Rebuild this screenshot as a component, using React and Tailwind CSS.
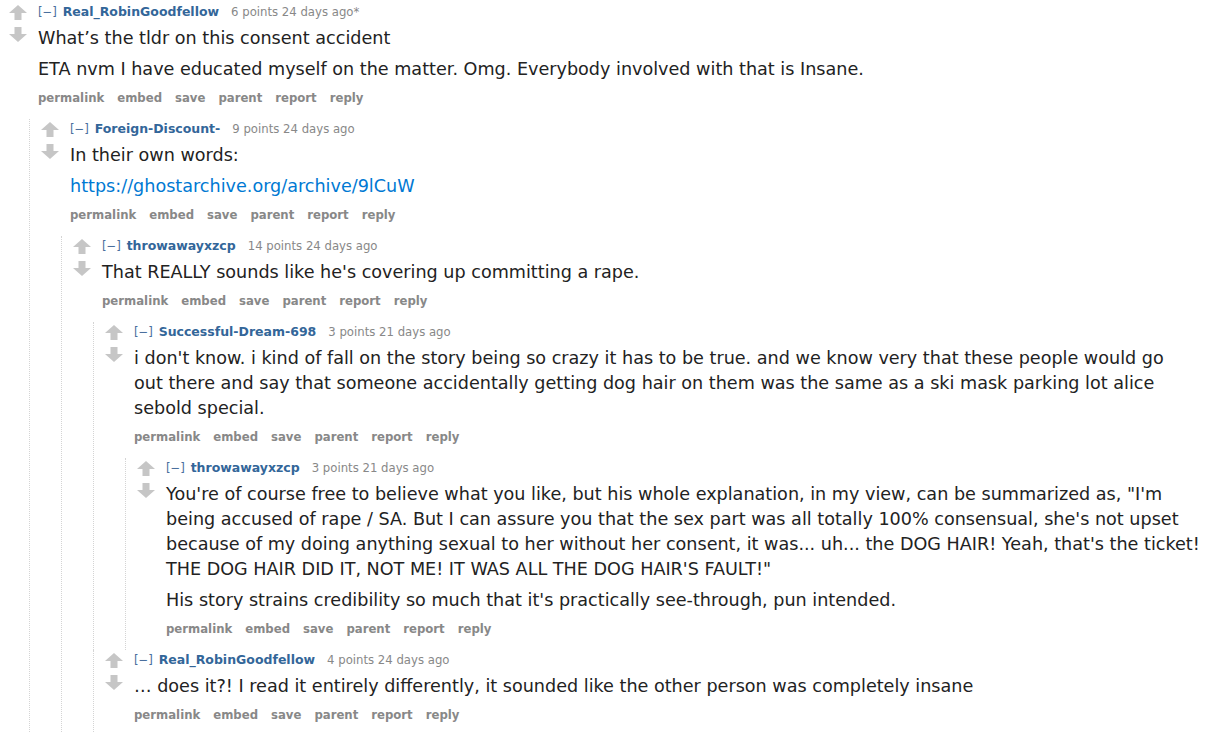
const FONT = { fontFamily: '"DejaVu Sans", Verdana, sans-serif' }

const THREAD = {
  user: 'Real_RobinGoodfellow',
  meta: '6 points 24 days ago*',
  body: [
    ['What’s the tldr on this consent accident'],
    ['ETA nvm I have educated myself on the matter. Omg. Everybody involved with that is Insane.'],
  ],
  children: [
    {
      user: 'Foreign-Discount-',
      meta: '9 points 24 days ago',
      body: [['In their own words:'], { link: 'https://ghostarchive.org/archive/9lCuW' }],
      children: [
        {
          user: 'throwawayxzcp',
          meta: '14 points 24 days ago',
          body: [["That REALLY sounds like he's covering up committing a rape."]],
          children: [
            {
              user: 'Successful-Dream-698',
              meta: '3 points 21 days ago',
              body: [
                [
                  "i don't know. i kind of fall on the story being so crazy it has to be true. and we know very that these people would go",
                  'out there and say that someone accidentally getting dog hair on them was the same as a ski mask parking lot alice',
                  'sebold special.',
                ],
              ],
              children: [
                {
                  user: 'throwawayxzcp',
                  meta: '3 points 21 days ago',
                  body: [
                    [
                      'You\'re of course free to believe what you like, but his whole explanation, in my view, can be summarized as, "I\'m',
                      "being accused of rape / SA. But I can assure you that the sex part was all totally 100% consensual, she's not upset",
                      "because of my doing anything sexual to her without her consent, it was... uh... the DOG HAIR! Yeah, that's the ticket!",
                      'THE DOG HAIR DID IT, NOT ME! IT WAS ALL THE DOG HAIR\'S FAULT!"',
                    ],
                    ["His story strains credibility so much that it's practically see-through, pun intended."],
                  ],
                },
              ],
            },
            {
              user: 'Real_RobinGoodfellow',
              meta: '4 points 24 days ago',
              body: [['… does it?! I read it entirely differently, it sounded like the other person was completely insane']],
            },
          ],
        },
      ],
    },
  ],
}

const BUTTONS = ['permalink', 'embed', 'save', 'parent', 'report', 'reply']

function Arrow({ down }) {
  return (
    <svg width="18" height="15" viewBox="0 0 18 15" className="block">
      {down ? (
        <path d="M5.5 0h7v7H18L9 15 0 7h5.5z" fill="#c6c6c6" />
      ) : (
        <path d="M9 0l9 8h-5.5v7h-7V8H0z" fill="#c6c6c6" />
      )}
    </svg>
  )
}

function Comment({ c, top }) {
  return (
    <div className={top ? 'pl-[9px]' : 'border-l border-dotted border-[#d4d4d4] pl-[11px]'}>
      <div className="flex">
        <div className="w-[18px] shrink-0 pt-[3px] flex flex-col gap-[7px]">
          <Arrow />
          <Arrow down />
        </div>
        <div className="ml-[11px] min-w-0">
          <div className="text-[11.7px] leading-[20px] text-[#888] whitespace-nowrap">
            <span className="text-[#4a6f9e]">[−]</span>{' '}
            <span className="ml-[2px] font-bold text-[12.5px] text-[#369]">{c.user}</span>
            <span className="ml-[12px]">{c.meta}</span>
          </div>
          <div className="mt-[4px] text-[17.6px] leading-[25px] text-[#222] space-y-[6px]">
            {c.body.map((p, i) =>
              p.link ? (
                <p key={i}>
                  <a className="text-[#0079d3]" href="#">{p.link}</a>
                </p>
              ) : (
                <p key={i} className="whitespace-nowrap">
                  {p.map((line, j) => (
                    <span key={j}>
                      {line}
                      {j < p.length - 1 && <br />}
                    </span>
                  ))}
                </p>
              )
            )}
          </div>
          <ul className="mt-[8px] mb-[13px] flex gap-[13px] text-[11.7px] leading-[16px] font-bold text-[#888]">
            {BUTTONS.map(b => (
              <li key={b}>{b}</li>
            ))}
          </ul>
        </div>
      </div>
      {c.children && (
        <div className="ml-[20px]">
          {c.children.map((ch, i) => (
            <Comment key={i} c={ch} />
          ))}
        </div>
      )}
    </div>
  )
}

export default function App() {
  return (
    <div className="bg-white min-h-screen w-[1216px] overflow-hidden pt-[2px]" style={FONT}>
      <Comment c={THREAD} top />
    </div>
  )
}
